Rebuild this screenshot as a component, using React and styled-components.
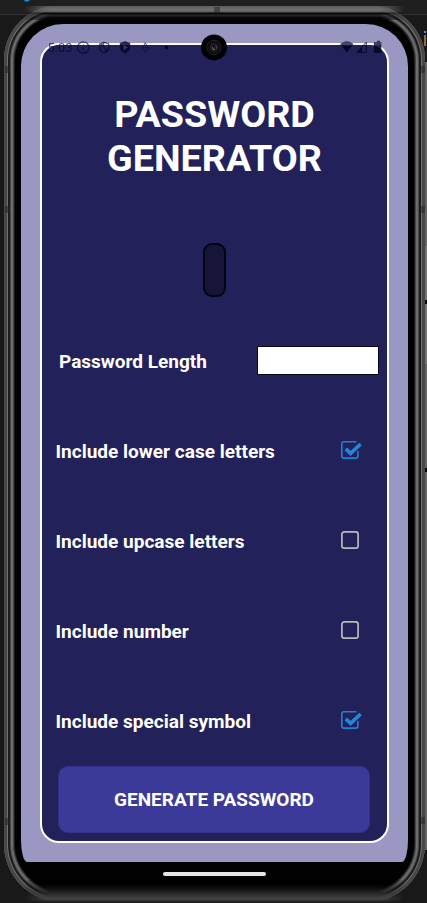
import React from 'react';
import styled, { createGlobalStyle } from 'styled-components';

const Global = createGlobalStyle`
  *{box-sizing:border-box}
  body{margin:0;background:#1c1c1c;font-family:Roboto,sans-serif;overflow:hidden}
`;

const Desktop = styled.div`
  position: relative;
  width: 427px;
  height: 903px;
  overflow: hidden;
  padding: 6px 0 0 4px;
  background:
    linear-gradient(#333, #333) 0 14px / 100% 1px no-repeat,
    linear-gradient(90deg, #555, #666) 421px 62px / 6px 788px no-repeat,
    linear-gradient(#1f1f1f 14px, #191919 14px);
`;
const Overlay = styled.svg`
  position: absolute;
  left: 0;
  top: 0;
  z-index: 2;
  pointer-events: none;
`;
const Phone = styled.div`
  position: relative;
  width: 421px;
  height: 896px;
  border-radius: 54px 54px 58px 58px;
  padding: 18px 16px 0 17px;
  background: #020202;
  box-shadow:
    inset 0 0 0 3px #484848,
    inset 0 0 0 4px #707070,
    inset 0 0 0 6px #1c1c1c,
    inset 0 0 0 7px #4c4c4c,
    inset 0 0 0 9px #6c6c6c,
    inset 0 0 0 10px #444,
    inset 0 0 0 11px #1d1d1d;

  &::before,
  &::after {
    content: '';
    position: absolute;
    left: 20px;
    right: 20px;
    mask-image: linear-gradient(90deg, transparent, #000 26px, #000 calc(100% - 26px), transparent);
  }
  &::before {
    top: 0;
    height: 14px;
    background: linear-gradient(#5c5c5c, #707070 4px, #5a5a5a 6px, #080808 7px, #050505 8px, #292929 9px, #050505 12px);
  }
  &::after {
    bottom: 0;
    height: 22px;
    background: linear-gradient(#000 4px, #101010 9px, #373737 16px, #444 19px, #222 22px);
  }
`;
const Screen = styled.div`
  position: relative;
  width: 387px;
  height: 838px;
  border-radius: 42px 42px 6px 6px / 42px 42px 22px 22px;
  padding: 19px;
  background: #9a98c3;
`;
const Card = styled.main`
  display: flex;
  flex-direction: column;
  width: 349px;
  height: 800px;
  border: 2px solid #fff;
  border-radius: 19px;
  background: #222159;
  color: #fff;
`;
const Title = styled.h1`
  margin: 47px 0 0;
  font-size: 37.7px;
  line-height: 44px;
  font-weight: 700;
  text-align: center;
`;
const Result = styled.div`
  width: 23px;
  height: 54px;
  margin: 63px 0 0 161px;
  border: 2px solid #030315;
  border-radius: 9px;
  background: #161539;
`;
const LengthRow = styled.label`
  display: flex;
  align-items: center;
  justify-content: space-between;
  height: 30px;
  margin: 48px 8px 0 17px;
  font-size: 19px;
  font-weight: 700;
`;
const LengthText = styled.span`
  padding-top: 2px;
`;
const LengthInput = styled.input`
  width: 122px;
  height: 29px;
  border: 1px solid #080812;
  background: #fff;
  outline: none;
`;
const Options = styled.div`
  margin-top: 30px;
`;
const Option = styled.div`
  display: flex;
  align-items: center;
  justify-content: space-between;
  height: 90px;
  padding: 2px 24px 0 13.5px;
  font-size: 19.05px;
  font-weight: 700;
`;
const CheckSvg = styled.svg`
  margin-top: -3px;
`;
const Generate = styled.button`
  width: 312px;
  height: 67px;
  margin: 0.6px 0 0 16px;
  padding: 1px 0 0;
  border: 1px solid #34338a;
  border-radius: 10px;
  background: #3c3a98;
  color: #fff;
  font: 700 19px Roboto, sans-serif;
`;
const HomeBar = styled.div`
  width: 103px;
  height: 4px;
  margin: 9.5px auto 0;
  border-radius: 2px;
  background: #e6e6e6;
  transform: translateX(-1px);
`;
const Clock = styled.text`
  font: 400 13px Roboto, sans-serif;
`;

function CheckBox({ checked }) {
  return (
    <CheckSvg width="23" height="20" viewBox="0 0 23 20" fill="none">
      {checked ? (
        <>
          <path d="M16.5 1.8H4Q1.8 1.8 1.8 4V15.9Q1.8 18.1 4 18.1H15.7Q17.9 18.1 17.9 15.9V11" stroke="#1e83d6" strokeWidth="1.6" />
          <path d="M5.8 8.8L10.6 13.4L20.6 4" stroke="#222159" strokeWidth="5" />
          <path d="M5.8 8.8L10.6 13.4L20.6 4" stroke="#1e88de" strokeWidth="3.7" />
        </>
      ) : (
        <rect x="1.9" y="1.8" width="16.2" height="16.4" rx="2.4" stroke="#bcb9bb" strokeWidth="1.7" />
      )}
    </CheckSvg>
  );
}

function DeviceOverlay() {
  return (
    <Overlay width="427" height="903" viewBox="0 0 427 903" fill="none">
      <path d="M24 0h6l-2 1.5h-3z" fill="#168de2" />
      <path d="M424 31h2v2h-2z" fill="#5b91ac" />
      <path d="M424 35h2v11h-2z" fill="#916b40" />
      <g fill="#262626" opacity=".55">
        <path d="M5 66h5v7H5zM5 206h5v7H5zM5 818h5v7H5z" />
        <path d="M420 66h5v7h-5zM420 206h5v7h-5zM420 817h5v7h-5zM214 7h6v6h-6z" />
      </g>
      <path d="M426 246v54M426 304v60" stroke="#858585" />
      <path d="M426 300v4M426 468v4" stroke="#080808" strokeWidth="2" />

      <g fill="#050528" opacity=".68">
        <Clock x="47.5" y="52.3" textLength="25">5:03</Clock>
        <circle cx="83.3" cy="47.5" r="5.7" stroke="#050528" strokeWidth="1.2" fill="none" />
        <path d="M82.8 44.4h1.1v1.2h-1.1zM82.8 46.8h1.1v4h-1.1z" />
        <path d="M104.2 42.2l4.5 1.7v3.7q0 3.6-4.5 5.4q-4.5-1.8-4.5-5.4v-3.7zM101 44l6.8 7.3M104.3 42.5q-3 3.5.2 5.2q2.8 1.7.2 4.8" stroke="#050528" strokeWidth="1.2" fill="none" />
        <path d="M145.3 52l-2.8-2.7q-1.1-1.9.8-2.1q1.3 0 2 1.1q.7-1.1 2-1.1q1.9.2.8 2.1zM143.8 45.5l1.5-2.8l1.5 2.8" stroke="#050528" fill="none" />
      </g>
      <path d="M125 41.3l5.2 1.8v4.1q0 4-5.2 6.2q-5.2-2.2-5.2-6.2v-4.1z" fill="#06062b" opacity=".85" />
      <path d="M123.6 45l4.2 2.5l-4.2 2.5z" fill="#3d3c6c" />
      <circle cx="166.4" cy="47.5" r="1.7" fill="#050526" />

      <g fill="#030320" opacity=".85">
        <path d="M340.2 44q6.5-5.4 13.2 0l-6.6 8.5z" />
        <path d="M366.2 42.3v10h-9.3z" fill="none" stroke="#050528" />
        <path d="M357 52.3l5-5.3v5.3z" />
        <path d="M375.7 42h1.5v-1.2h2.6V42h1.5v10.8h-7.4V42z" />
      </g>
      <path d="M340.2 44q6.5-5.4 13.2 0l-1 1.3h-11.2zM373.9 42h7.4v3h-7.4z" fill="#77779a" opacity=".4" />

      <circle cx="214" cy="47.4" r="13" fill="#020204" />
      <circle cx="214" cy="47.4" r="7.2" fill="#0c0c0e" stroke="#222" />
      <circle cx="214" cy="47.4" r="3.8" fill="#15131b" stroke="#29292a" />
      <path d="M212.2 47.2l1.2 2.4l1.5-.4" stroke="#9b7a46" />
      <path d="M215.4 45.5q1.6 1 .8 3" stroke="#623d64" />
    </Overlay>
  );
}

const options = [
  ['Include lower case letters', true],
  ['Include upcase letters', false],
  ['Include number', false],
  ['Include special symbol', true],
];

export default function App() {
  return (
    <>
      <Global />
      <Desktop>
        <Phone>
          <Screen>
            <Card>
              <Title>PASSWORD<br />GENERATOR</Title>
              <Result />
              <LengthRow><LengthText>Password Length</LengthText><LengthInput /></LengthRow>
              <Options>
                {options.map(([label, checked]) => (
                  <Option key={label}>{label}<CheckBox checked={checked} /></Option>
                ))}
              </Options>
              <Generate>GENERATE PASSWORD</Generate>
            </Card>
          </Screen>
          <HomeBar />
        </Phone>
        <DeviceOverlay />
      </Desktop>
    </>
  );
}
